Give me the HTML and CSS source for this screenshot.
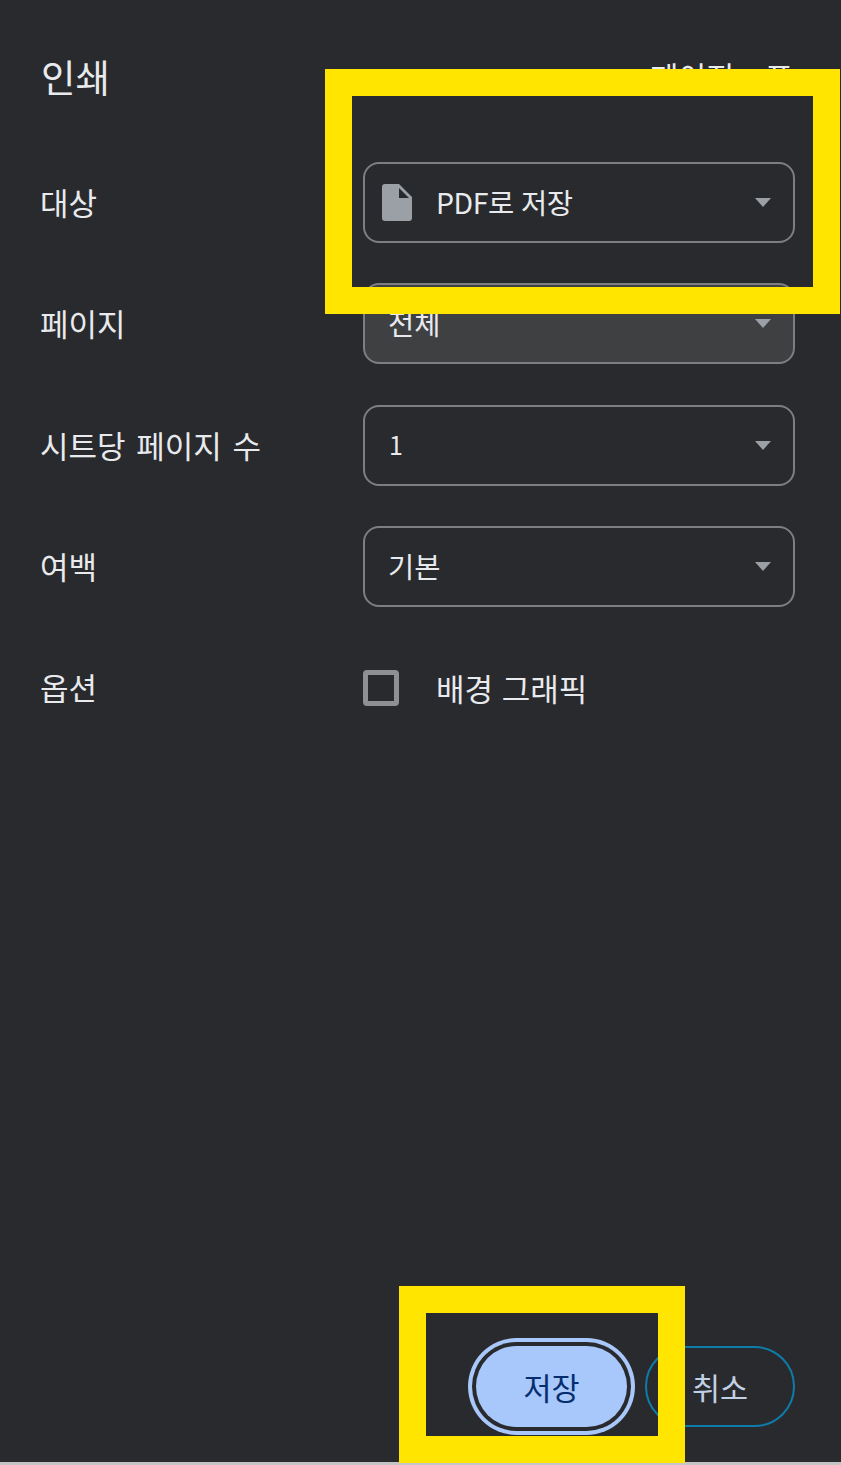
FILE: index.html
```html
<!DOCTYPE html>
<html lang="ko">
<head>
    <meta charset="UTF-8">
    <title>인쇄</title>
    <link rel="stylesheet" href="styles.css">
</head>
<body>
    <div class="sidebar">
        <div class="header">
            <h1 class="title">인쇄</h1>
            <span class="sheet-count">페이지 표</span>
        </div>

        <div class="settings">
            <div class="row">
                <span class="label">대상</span>
                <div class="select">
                    <svg class="file-icon" viewBox="0 0 30 37" width="30" height="37">
                        <path d="M3 0H17L30 13V34a3 3 0 0 1-3 3H3a3 3 0 0 1-3-3V3a3 3 0 0 1 3-3Z" fill="#9aa0a6"/>
                        <path d="M17 4V14H27Z" fill="#292a2d"/>
                    </svg>
                    <span class="value value-pdf">PDF로 저장</span>
                    <span class="arrow"></span>
                </div>
            </div>
            <div class="row">
                <span class="label">페이지</span>
                <div class="select select-hover">
                    <span class="value">전체</span>
                    <span class="arrow"></span>
                </div>
            </div>
            <div class="row">
                <span class="label">시트당 페이지 수</span>
                <div class="select">
                    <span class="value value-num">1</span>
                    <span class="arrow"></span>
                </div>
            </div>
            <div class="row">
                <span class="label">여백</span>
                <div class="select">
                    <span class="value">기본</span>
                    <span class="arrow"></span>
                </div>
            </div>
            <div class="row">
                <span class="label">옵션</span>
                <div class="option">
                    <span class="checkbox"></span>
                    <span class="option-text">배경 그래픽</span>
                </div>
            </div>
        </div>

        <div class="buttons">
            <button class="btn btn-save">저장</button>
            <button class="btn btn-cancel">취소</button>
        </div>
    </div>

    <!-- Yellow annotation boxes -->
    <div class="mark mark-dest"></div>
    <div class="mark mark-save"></div>
</body>
</html>
```

FILE: styles.css
```css
/*Fonts*/
html, body {
    margin: 0;
    height: 100%;
}

body {
    background: #292a2d;
    color: #e8eaed;
    font-family: "Noto Sans CJK KR", "Liberation Sans", sans-serif;
    overflow: hidden;
    position: relative;
}

.sidebar {
    height: 1465px;
    display: flex;
    flex-direction: column;
    box-sizing: border-box;
    padding: 0 46px 35px 40px;
    border-bottom: 3px solid #c4c4c4;
}

.header {
    display: flex;
    justify-content: space-between;
    align-items: center;
    height: 56px;
    margin-top: 48px;
}

.title {
    margin: 0 0 0 1px;
    font-size: 37.5px;
    font-weight: 400;
    line-height: 56px;
}

.sheet-count {
    font-size: 30.5px;
    word-spacing: 22px;
    margin-right: 2px;
}

.settings {
    display: flex;
    flex-direction: column;
    gap: 40.33px;
    margin-top: 58px;
    flex: 1;
}

.row {
    display: flex;
    align-items: center;
    height: 81px;
}

.label {
    width: 323px;
    font-size: 31px;
    word-spacing: 2px;
    flex-shrink: 0;
    padding-bottom: 2px;
}

.select {
    flex: 1;
    height: 81px;
    box-sizing: border-box;
    border: 2px solid #7d7e80;
    border-radius: 16px;
    display: flex;
    align-items: center;
    padding: 0 22px 0 23px;
}

.select-hover {
    background: #3f4042;
}

.file-icon {
    margin: 0 24px 0 -6px;
    flex-shrink: 0;
}

.value {
    font-size: 28.5px;
    flex: 1;
    padding-bottom: 2px;
}

.value-pdf {
    letter-spacing: -0.5px;
}

.value-num {
    font-size: 25px;
    padding-left: 1px;
}

.arrow {
    width: 0;
    height: 0;
    border-left: 8px solid transparent;
    border-right: 8px solid transparent;
    border-top: 9px solid #9aa0a6;
}

.option {
    display: flex;
    align-items: center;
    gap: 37px;
}

.option-text {
    font-size: 31px;
}

.checkbox {
    width: 36px;
    height: 36px;
    box-sizing: border-box;
    border: 5px solid #8f9092;
    border-radius: 4px;
}

.buttons {
    display: flex;
    justify-content: flex-end;
    gap: 18px;
}

.btn {
    height: 81px;
    border-radius: 41px;
    font-family: inherit;
    font-size: 30.5px;
    box-sizing: border-box;
}

.btn-save {
    width: 151px;
    background: #a8c7fa;
    color: #062e6f;
    border: none;
    box-shadow: 0 0 0 4px #292a2d, 0 0 0 8px #a8c7fa;
}

.btn-cancel {
    width: 150px;
    background: transparent;
    color: #c2d0e6;
    border: 2px solid #0e7cab;
}

.mark {
    position: absolute;
    box-sizing: border-box;
    border: 27px solid #ffe500;
}

.mark-dest {
    left: 325px;
    top: 69px;
    width: 515px;
    height: 245px;
}

.mark-save {
    left: 399px;
    top: 1286px;
    width: 286px;
    height: 177px;
}
```
